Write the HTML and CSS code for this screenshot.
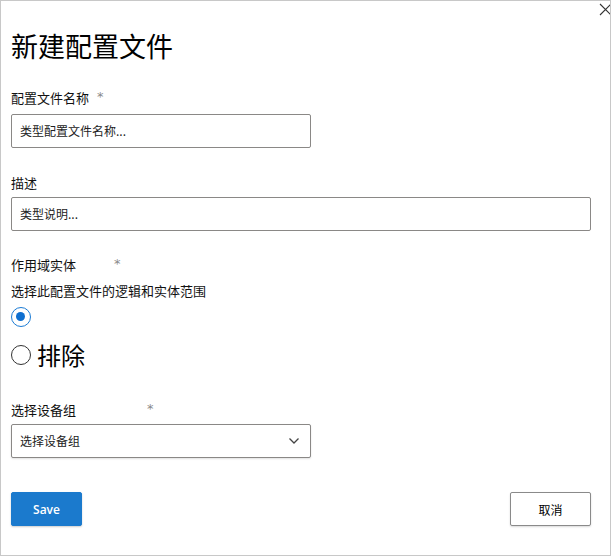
FILE: index.html
```html
<!DOCTYPE html>
<html lang="zh-CN">
<head>
<meta charset="utf-8">
<title>新建配置文件</title>
<link rel="stylesheet" href="styles.css">
</head>
<body>
<div class="panel">
  <button class="close" aria-label="关闭">
    <svg width="13" height="13" viewBox="0 0 13 13"><path d="M1 1 L12 12 M12 1 L1 12" stroke="#333" stroke-width="1.1" fill="none"/></svg>
  </button>
  <h1 class="title">新建配置文件</h1>

  <div class="label label-name"><span>配置文件名称</span><span class="req req-name">*</span></div>
  <div class="input input-short input-name">类型配置文件名称...</div>

  <div class="label label-desc"><span>描述</span></div>
  <div class="input input-full input-desc">类型说明...</div>

  <div class="label label-scope"><span>作用域实体</span><span class="req req-scope">*</span></div>
  <div class="hint">选择此配置文件的逻辑和实体范围</div>
  <div class="radio-row radio-first"><span class="radio checked"></span></div>
  <div class="radio-row radio-second"><span class="radio"></span><span class="radio-text">排除</span></div>

  <div class="label label-group"><span>选择设备组</span><span class="req req-group">*</span></div>
  <div class="input input-short select">
    <span>选择设备组</span>
    <svg class="chev" width="12" height="8" viewBox="0 0 12 8"><path d="M1.5 1.5 L6 6 L10.5 1.5" stroke="#444" stroke-width="1.3" fill="none"/></svg>
  </div>

  <div class="actions">
    <button class="btn primary">Save</button>
    <button class="btn secondary">取消</button>
  </div>
</div>
</body>
</html>
```

FILE: styles.css
```css
* { box-sizing: border-box; }
html, body { margin: 0; padding: 0; background: #fff; }
body {
  font-family: "Noto Sans CJK SC", "Noto Sans", sans-serif;
  color: #111;
}
.panel {
  position: relative;
  width: 611px;
  height: 556px;
  border: 1px solid #c8c8c8;
  padding: 0 19px 0 10px;
  display: flex;
  flex-direction: column;
  overflow: hidden;
}
.close {
  position: absolute;
  top: 2px;
  right: -2px;
  width: 13px;
  height: 13px;
  padding: 0;
  border: 0;
  background: none;
  display: block;
}
.close svg { display: block; }
.title {
  margin: 31px 0 0 0;
  font-size: 27px;
  line-height: 27px;
  font-weight: 400;
  color: #000;
}
.label {
  display: flex;
  align-items: flex-start;
  font-size: 13px;
  line-height: 16px;
  height: 16px;
  color: #111;
}
.req {
  color: #8a8a8a;
  font-family: "DejaVu Sans", sans-serif;
  font-size: 13px;
  line-height: 14px;
}
.label-name { margin-top: 31px; }
.req-name { margin-left: 8px; }
.label-desc { margin-top: 27px; }
.label-scope { margin-top: 26px; }
.req-scope { margin-left: 38px; }
.label-group { margin-top: 33px; }
.req-group { margin-left: 71px; }
.input {
  height: 34px;
  border: 1px solid #8a8886;
  border-radius: 2px;
  padding: 0 8px;
  font-size: 12px;
  line-height: 32px;
  color: #222;
  background: #fff;
}
.input-short { width: 300px; }
.input-full { width: 100%; }
.input-name { margin-top: 8px; }
.input-desc { margin-top: 6px; }
.hint {
  margin-top: 10px;
  font-size: 13px;
  line-height: 16px;
  color: #111;
}
.radio-row {
  display: flex;
  align-items: center;
}
.radio-first { margin-top: 8px; height: 20px; }
.radio-second { margin-top: 14px; height: 28px; }
.radio {
  width: 20px;
  height: 20px;
  border-radius: 50%;
  border: 1px solid #333;
  display: inline-block;
  flex: none;
  position: relative;
}
.radio.checked { border: 1.5px solid #1b7bd4; }
.radio.checked::after {
  content: "";
  position: absolute;
  left: 4px;
  top: 4px;
  width: 9px;
  height: 9px;
  border-radius: 50%;
  background: #0f6fd0;
}
.radio-text {
  margin-left: 6px;
  font-size: 24px;
  line-height: 28px;
  color: #000;
}
.select {
  margin-top: 6px;
  display: flex;
  align-items: center;
  justify-content: space-between;
  padding-right: 10px;
  box-shadow: 0 1px 2px rgba(0,0,0,0.12);
}
.chev { display: block; }
.actions {
  margin-top: 34px;
  display: flex;
  justify-content: space-between;
}
.btn {
  height: 34px;
  border-radius: 2px;
  font-size: 12px;
  padding: 0;
  cursor: pointer;
}
.primary {
  width: 71px;
  background: #1b7acd;
  border: 1px solid #1b7acd;
  color: #fff;
  font-family: "Open Sans", "Noto Sans", sans-serif;
  font-weight: 600;
  box-shadow: 0 1px 2px rgba(0,0,0,0.2);
}
.secondary {
  width: 81px;
  background: #fff;
  border: 1px solid #8a8a8a;
  color: #000;
  font-family: "Noto Sans CJK SC", sans-serif;
  box-shadow: 0 1px 2px rgba(0,0,0,0.15);
}
```
